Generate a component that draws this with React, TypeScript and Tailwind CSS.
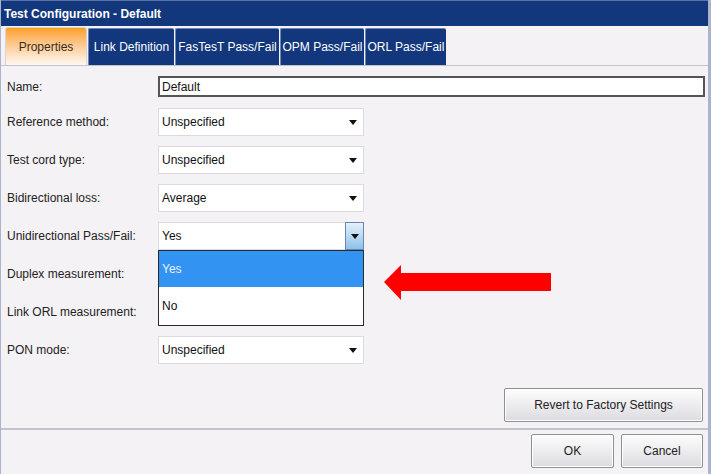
import React from "react";

const font = { fontFamily: '"Liberation Sans", Arial, sans-serif' };

function Caret() {
  return (
    <svg width="8" height="5" viewBox="0 0 8 5" className="block">
      <polygon points="0,0 8,0 4,5" fill="#111" />
    </svg>
  );
}

function Select({ value, open }: { value: string; open?: boolean }) {
  return (
    <div className="relative w-[206px] h-[28px] bg-white border border-[#dcd9e0] flex items-center pl-[3px] text-[12px] text-[#111]">
      <span className="flex-1">{value}</span>
      {open ? (
        <div className="w-[19px] h-[28px] -my-px -mr-px border border-[#6a88ad] bg-gradient-to-b from-[#e6f0f9] to-[#8cc2ec] flex items-center justify-center">
          <Caret />
        </div>
      ) : (
        <div className="w-[20px] flex items-center justify-center">
          <Caret />
        </div>
      )}
      {open && (
        <div className="absolute left-[-1px] top-[27px] w-[206px] h-[76px] border border-[#2b2b2b] bg-white z-10 flex flex-col">
          <div className="h-[36px] bg-[#3393f3] text-[#e8f2ff] flex items-center pl-[3px]">Yes</div>
          <div className="h-[38px] flex items-center pl-[3px]">No</div>
        </div>
      )}
    </div>
  );
}

function Row({ label, children }: { label: string; children: React.ReactNode }) {
  return (
    <div className="flex items-center h-[28px]">
      <div className="w-[157px] pl-[6px] text-[12px] text-[#222]">{label}</div>
      {children}
    </div>
  );
}

function Btn({ w, children }: { w: string; children: React.ReactNode }) {
  return (
    <div
      className={`${w} h-[34px] border border-[#8e8e95] rounded-[2px] bg-gradient-to-b from-[#fdfdfd] to-[#dcdbe0] flex items-center justify-center text-[12px] text-[#222] shadow-[inset_0_0_0_1px_#ffffff]`}
    >
      {children}
    </div>
  );
}

export default function App() {
  const tabs = ["Link Definition", "FasTesT Pass/Fail", "OPM Pass/Fail", "ORL Pass/Fail"];
  const tabW = ["w-[86px]", "w-[104px]", "w-[84px]", "w-[81px]"];
  return (
    <div style={font} className="w-[711px] h-[474px] bg-[#f5f2f6] flex flex-col border-l border-r-[3px] border-[#aab4cc] overflow-hidden relative">
      <div className="h-[26px] bg-[#12377c] border-t border-[#5a72a5] flex items-center pl-[3px] text-white font-bold text-[12px]">
        Test Configuration - Default
      </div>
      <div className="h-[40px] flex items-end pl-[4px] border-b border-[#c4c2cc] gap-[1px]">
        <div className="w-[82px] h-[38px] rounded-t-[3px] border border-[#d9d4d0] border-b-0 bg-gradient-to-b from-[#fba01a] to-[#fdf8f2] flex items-center justify-center text-[12px] text-[#3a2a1a]">
          Properties
        </div>
        {tabs.map((t, i) => (
          <div
            key={t}
            className={`${tabW[i]} h-[37px] rounded-t-[2px] bg-[#12377c] border-l border-t border-[#6f85b4] flex items-center justify-center text-[12px] text-white`}
          >
            {t}
          </div>
        ))}
      </div>
      <div className="flex flex-col pt-[10px] gap-[10px] relative">
        <div className="flex items-center h-[21px] mb-[1px]">
          <div className="w-[157px] pl-[6px] text-[12px] text-[#222]">Name:</div>
          <div className="w-[547px] h-[21px] border-2 border-[#555] bg-white flex items-center pl-[2px] text-[12px] text-[#111]">
            Default
          </div>
        </div>
        <Row label="Reference method:"><Select value="Unspecified" /></Row>
        <Row label="Test cord type:"><Select value="Unspecified" /></Row>
        <Row label="Bidirectional loss:"><Select value="Average" /></Row>
        <Row label="Unidirectional Pass/Fail:"><Select value="Yes" open /></Row>
        <Row label="Duplex measurement:"><Select value="" /></Row>
        <Row label="Link ORL measurement:"><Select value="" /></Row>
        <Row label="PON mode:"><Select value="Unspecified" /></Row>
        <svg className="absolute left-[383px] top-[199px]" width="168" height="36" viewBox="0 0 168 36">
          <polygon points="0,17 17,0 17,8 167,8 167,26 17,26 17,35" fill="#ff0000" />
        </svg>
      </div>
      <div className="flex-1 flex items-start justify-end pr-[5px] pt-[24px]">
        <Btn w="w-[199px]">Revert to Factory Settings</Btn>
      </div>
      <div className="h-[46px] border-t-2 border-[#c4c2cc] flex items-start justify-end gap-[7px] pr-[5px] pt-[4px]">
        <Btn w="w-[83px]">OK</Btn>
        <Btn w="w-[82px]">Cancel</Btn>
      </div>
    </div>
  );
}
